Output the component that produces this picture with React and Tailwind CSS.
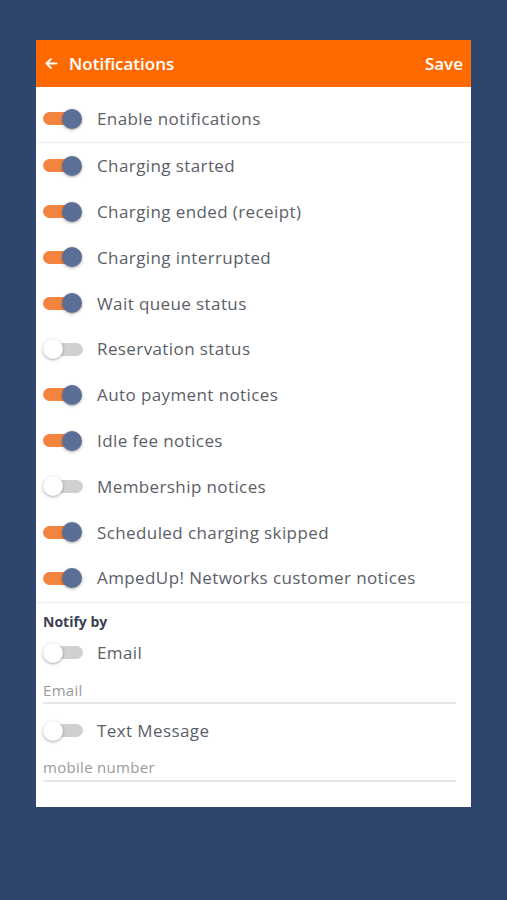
import React, { useState } from 'react';

const Toggle = ({ on, onClick }) => (
    <button onClick={onClick} className="relative w-[40px] h-[22px] shrink-0 flex items-center">
        <span className={`block w-[36px] h-[13px] rounded-full ${on ? 'bg-[#f2843f]' : 'bg-[#d0d0d0] ml-[4px]'}`} />
        <span
            className={`absolute top-[1px] w-[20px] h-[20px] rounded-full shadow-[0_1px_3px_rgba(0,0,0,0.35)] ${
                on ? 'left-[19px] bg-[#5b6e96]' : 'left-0 bg-white'
            }`}
        />
    </button>
);

const items = [
    ['Charging started', true],
    ['Charging ended (receipt)', true],
    ['Charging interrupted', true],
    ['Wait queue status', true],
    ['Reservation status', false],
    ['Auto payment notices', true],
    ['Idle fee notices', true],
    ['Membership notices', false],
    ['Scheduled charging skipped', true],
    ['AmpedUp! Networks customer notices', true],
];

export default function App() {
    const [enabled, setEnabled] = useState(true);
    const [opts, setOpts] = useState(items.map(i => i[1]));
    const [email, setEmail] = useState(false);
    const [sms, setSms] = useState(false);

    const flip = (idx) => setOpts(o => o.map((v, i) => (i === idx ? !v : v)));

    return (
        <div className="min-h-[900px] bg-[#2e466d] pt-[40px] font-['Open_Sans',sans-serif]">
            <div className="ml-[36px] w-[435px] bg-white">
                {/* Header */}
                <div className="h-[47px] bg-[#ff6a00] flex items-center justify-between px-[8px] text-white">
                    <div className="flex items-center gap-[10px]">
                        <svg width="15" height="15" viewBox="0 0 24 24" fill="none" stroke="currentColor" strokeWidth="3.2" strokeLinecap="round" strokeLinejoin="round">
                            <path d="M20 12H5" />
                            <path d="M11 5l-7 7 7 7" />
                        </svg>
                        <span className="text-[17px] font-semibold">Notifications</span>
                    </div>
                    <span className="text-[17px] font-semibold">Save</span>
                </div>

                {/* Master toggle */}
                <div className="h-[56px] pt-[8px] flex items-center gap-[14px] pl-[7px] border-b border-[#eeeeee]">
                    <Toggle on={enabled} onClick={() => setEnabled(!enabled)} />
                    <span className="text-[17px] tracking-[0.4px] text-[#5b6068]">Enable notifications</span>
                </div>

                <div className="pb-[1px] border-b border-[#eeeeee]">
                    {items.map(([label], idx) => (
                        <div key={label} className="h-[45.8px] flex items-center gap-[14px] pl-[7px]">
                            <Toggle on={opts[idx]} onClick={() => flip(idx)} />
                            <span className="text-[17px] tracking-[0.4px] text-[#5b6068]">{label}</span>
                        </div>
                    ))}
                </div>

                {/* Notify by */}
                <div className="px-[7px] pb-[25px]">
                    <div className="pt-[8px] text-[14px] font-bold text-[#3a4150]">Notify by</div>
                    <div className="mt-[9px] h-[24px] flex items-center gap-[14px]">
                        <Toggle on={email} onClick={() => setEmail(!email)} />
                        <span className="text-[17px] tracking-[0.4px] text-[#5b6068]">Email</span>
                    </div>
                    <input
                        placeholder="Email"
                        className="mt-[13px] w-[413px] h-[26px] border-b-2 border-[#e6e6e6] text-[15px] tracking-[0.3px] outline-none placeholder:text-[#9a9a9a]"
                    />
                    <div className="mt-[15px] h-[24px] flex items-center gap-[14px]">
                        <Toggle on={sms} onClick={() => setSms(!sms)} />
                        <span className="text-[17px] tracking-[0.4px] text-[#5b6068]">Text Message</span>
                    </div>
                    <input
                        placeholder="mobile number"
                        className="mt-[12px] w-[413px] h-[27px] border-b-2 border-[#e6e6e6] text-[15px] tracking-[0.3px] outline-none placeholder:text-[#9a9a9a]"
                    />
                </div>
            </div>
        </div>
    );
}
